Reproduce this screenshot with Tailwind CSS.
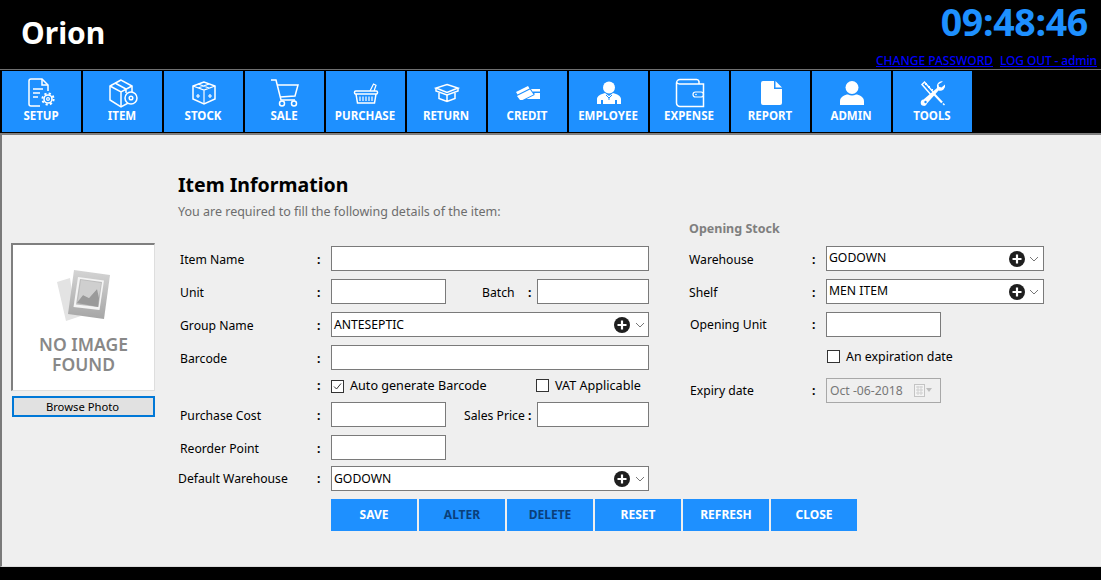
<!DOCTYPE html>
<html lang="en">
<head>
<meta charset="UTF-8" />
<title>Orion</title>
<script src="https://cdn.jsdelivr.net/npm/@tailwindcss/browser@4"></script>
</head>
<body class="bg-black font-['Noto_Sans','Open_Sans',sans-serif] text-[12.2px] text-black overflow-hidden">
<div class="w-[1101px] h-[580px] flex flex-col bg-black">

  <!-- Header -->
  <header class="h-[69px] flex justify-between shrink-0">
    <div class="pl-[21px] pt-[12px] text-[30px] leading-[42px] font-bold text-white">Orion</div>
    <div class="flex flex-col items-end pr-[4px]">
      <div class="pr-[9px] text-[37.5px] leading-[44px] font-bold tracking-[-0.3px] text-[#1e90ff]">09:48:46</div>
      <div class="mt-[9px] flex gap-[7px] text-[12px] leading-[16px] font-medium text-[#0000ff] underline">
        <a href="#">CHANGE PASSWORD</a>
        <a href="#" class="tracking-[-0.13px]">LOG OUT - admin</a>
      </div>
    </div>
  </header>

  <!-- Toolbar -->
  <nav class="h-[64px] shrink-0 border-t border-[#6f6f6f] pt-[1px] pl-[2px] flex gap-[2px]">
    <a class="w-[79px] h-[61px] bg-[#1e90ff] flex flex-col items-center pt-[7px] pr-[1px] text-white text-[11.5px] font-bold">
      <svg class="w-[31px] h-[31px] shrink-0" viewBox="0 0 31 31" fill="none" stroke="#fff" stroke-width="1.5"><path d="M14 28H5a2 2 0 0 1-2-2V3a2 2 0 0 1 2-2h11l6 6v6"/><path d="M16 1v6h6M7 11h10M7 15h7M7 19h5"/><circle cx="22" cy="21" r="7" fill="#1e90ff" stroke="none"/><circle cx="22" cy="21" r="4" stroke-width="1.6"/><circle cx="22" cy="21" r="5.6" stroke-width="2" stroke-dasharray="2.2 2.2"/><circle cx="22" cy="21" r="1.4" stroke-width="1.2"/></svg>
      <span class="leading-[14px]">SETUP</span>
    </a>
    <a class="w-[79px] h-[61px] bg-[#1e90ff] flex flex-col items-center pt-[7px] pr-[1px] text-white text-[11.5px] font-bold">
      <svg class="w-[31px] h-[31px] shrink-0" viewBox="0 0 31 31" fill="none" stroke="#fff" stroke-width="1.5"><path d="M14 2 3 8v14l11 7 11-6V8z"/><path d="M3 8l11 6 11-6M14 14v15M8 5l11 6v4"/><circle cx="24" cy="20" r="6" fill="#1e90ff"/><circle cx="24" cy="20" r="1.8"/></svg>
      <span class="leading-[14px]">ITEM</span>
    </a>
    <a class="w-[79px] h-[61px] bg-[#1e90ff] flex flex-col items-center pt-[7px] pr-[1px] text-white text-[11.5px] font-bold">
      <svg class="w-[31px] h-[31px] shrink-0" viewBox="0 0 31 31" fill="none" stroke="#fff" stroke-width="1.5"><path d="M16 4 5 8v13l11 5 11-5V8z"/><path d="M5 8l11 4 11-4M16 12v14M10 6l11 4M21 6l-11 4M10 20v-4M12 18h-4M22 20v-4M20 18h4" stroke-width="1.2"/></svg>
      <span class="leading-[14px]">STOCK</span>
    </a>
    <a class="w-[79px] h-[61px] bg-[#1e90ff] flex flex-col items-center pt-[7px] pr-[1px] text-white text-[11.5px] font-bold">
      <svg class="w-[31px] h-[31px] shrink-0" viewBox="0 0 31 31" fill="none" stroke="#fff" stroke-width="1.5"><path d="M2 2h5l5 20h14"/><path d="M8 7h21l-3 11-15 1"/><circle cx="13" cy="25.5" r="2.5"/><circle cx="25" cy="25.5" r="2.5"/></svg>
      <span class="leading-[14px]">SALE</span>
    </a>
    <a class="w-[79px] h-[61px] bg-[#1e90ff] flex flex-col items-center pt-[7px] pr-[1px] text-white text-[11.5px] font-bold">
      <svg class="w-[31px] h-[31px] shrink-0" viewBox="0 0 31 31" fill="none" stroke="#fff" stroke-width="1.5"><rect x="4.5" y="13" width="23" height="3" rx="1.2"/><path d="M6 16l1.5 9h17l1.5-9"/><path d="M20 13l3.5-7 2.5 1.2-2 5.8M10 18.500v4.500M13 18.500v4.500M16 18.500v4.500M19 18.500v4.500M22 18.500v4.500" stroke-width="1.2"/></svg>
      <span class="leading-[14px]">PURCHASE</span>
    </a>
    <a class="w-[79px] h-[61px] bg-[#1e90ff] flex flex-col items-center pt-[7px] pr-[1px] text-white text-[11.5px] font-bold">
      <svg class="w-[31px] h-[31px] shrink-0" viewBox="0 0 31 31" fill="none" stroke="#fff" stroke-width="1.500"><path d="M16 6.500 27 10l-11 4.500L5 10z"/><path d="M5 10v3l11 4 11-4v-3"/><path d="M8 15v5.500l8 3 8-3V15M16 17v6.500"/></svg>
      <span class="leading-[14px]">RETURN</span>
    </a>
    <a class="w-[79px] h-[61px] bg-[#1e90ff] flex flex-col items-center pt-[7px] pr-[1px] text-white text-[11.5px] font-bold">
      <svg class="w-[31px] h-[31px] shrink-0" viewBox="0 0 31 31" fill="#fff"><path d="M4 14 16 8l1.500 2.500L5.500 16.500z"/><path d="M5 18l13-6.500 3.500 5-11 5.500H8z"/><path d="M19 11h9v2.500h-7.500zM22.500 15H28v6H14.500l8-4z"/></svg>
      <span class="leading-[14px]">CREDIT</span>
    </a>
    <a class="w-[79px] h-[61px] bg-[#1e90ff] flex flex-col items-center pt-[7px] pr-[1px] text-white text-[11.5px] font-bold">
      <svg class="w-[31px] h-[31px] shrink-0" viewBox="0 0 31 31" fill="#fff"><circle cx="16" cy="9.500" r="6"/><path d="M4 26v-5c0-3 4-5 8-6l4 3 4-3c4 1 8 3 8 6v5h-4v-4h-2v4H10v-4H8v4z"/><path d="M13 17l3 3 3-3M16 20v2" fill="none" stroke="#1e90ff" stroke-width="1"/></svg>
      <span class="leading-[14px]">EMPLOYEE</span>
    </a>
    <a class="w-[79px] h-[61px] bg-[#1e90ff] flex flex-col items-center pt-[7px] pr-[1px] text-white text-[11.5px] font-bold">
      <svg class="w-[31px] h-[31px] shrink-0" viewBox="0 0 31 31" fill="none" stroke="#fff" stroke-width="1.500"><path d="M25 6V3.500A2.500 2.500 0 0 0 22.500 1.500H6A3.500 3.500 0 0 0 2.500 5v20A3.500 3.500 0 0 0 6 28.500h23.500V6H6A3.500 3.500 0 0 1 2.500 4"/><rect x="19" y="14" width="10.500" height="5" rx="2.500" stroke-width="1.200"/><circle cx="22" cy="16.500" r="0.800" fill="#fff" stroke="none"/></svg>
      <span class="leading-[14px]">EXPENSE</span>
    </a>
    <a class="w-[79px] h-[61px] bg-[#1e90ff] flex flex-col items-center pt-[7px] pr-[1px] text-white text-[11.5px] font-bold">
      <svg class="w-[31px] h-[31px] shrink-0" viewBox="0 0 31 31" fill="#fff"><path d="M8 3h11v8h8v14a2 2 0 0 1-2 2H8a2 2 0 0 1-2-2V5a2 2 0 0 1 2-2z"/><path d="M20.500 3 27 9.500h-6.500z"/></svg>
      <span class="leading-[14px]">REPORT</span>
    </a>
    <a class="w-[79px] h-[61px] bg-[#1e90ff] flex flex-col items-center pt-[7px] pr-[1px] text-white text-[11.5px] font-bold">
      <svg class="w-[31px] h-[31px] shrink-0" viewBox="0 0 31 31" fill="#fff"><circle cx="16" cy="9.500" r="6.500"/><path d="M4 27v-4c0-4 5-6.500 8-6.500 2.500 1.300 5.500 1.300 8 0 3 0 8 2.500 8 6.500v4z"/></svg>
      <span class="leading-[14px]">ADMIN</span>
    </a>
    <a class="w-[79px] h-[61px] bg-[#1e90ff] flex flex-col items-center pt-[7px] pr-[1px] text-white text-[11.5px] font-bold">
      <svg class="w-[31px] h-[31px] shrink-0" viewBox="0 0 31 31" fill="none" stroke="#fff"><path d="M5 6.500 7.500 4l10 11.500-2.500 2.500z" stroke-width="1.500"/><path d="M17 16l8 8.500" stroke-width="2.200"/><path d="M26 25.500l1.500 1.500" stroke-width="1.500"/><path d="M8 7l2-2M11 10l2-2M14 13l2-2" stroke-width="1"/><path d="M26 3.500a5 5 0 0 0-6 6.500L6.500 21.500a3.200 3.200 0 1 0 3.500 4L21.500 12.500a5 5 0 0 0 6.500-6L24.500 9.500l-2.500-.8-.5-2.500z" fill="#fff" stroke="none"/><circle cx="8.500" cy="24" r="1.200" fill="#1e90ff" stroke="none"/></svg>
      <span class="leading-[14px]">TOOLS</span>
    </a>
  </nav>

  <!-- Main panel -->
  <main class="w-[1101px] h-[434px] shrink-0 border-t-[2px] border-t-[#808080] border-l-[2px] border-l-[#7a7a7a] border-b border-b-[#dcdcdc] bg-[#efefef] flex flex-col">
    <div class="flex h-[364px]">

      <!-- Photo -->
      <div class="w-[176px] shrink-0 pl-[9px] pt-[108px]">
        <div class="w-[144px] h-[148px] border-[1px] border-t-[2px] border-l-[2px] border-t-[#7f7f7f] border-l-[#7f7f7f] border-r-[#dedede] border-b-[#dedede] bg-white flex flex-col items-center pt-[24px]">
          <svg class="w-[56px] h-[54px] shrink-0" viewBox="0 0 56 54">
            <defs><linearGradient id="ph" x1="0" y1="0" x2="0" y2="1"><stop offset="0" stop-color="#d4d4d4"/><stop offset="1" stop-color="#a6a6a6"/></linearGradient></defs>
            <path d="M1 13 14 9l5 36 6 2-15 5z" fill="#e3e3e3"/>
            <path d="M18 1 54 6l-6 44-36-5z" fill="url(#ph)"/>
            <path d="M22 8 48 11.500 43.500 41 17.500 38z" fill="#f4f4f4"/>
            <path d="M24 10 46 13l-3.500 25L20 35.500z" fill="#bdbdbd"/>
            <path d="M21 34l6-8 6 3 8-9 3 1-2 17z" fill="#9a9a9a"/>
            <path d="M25 11 45 14 43 29l-2-9-8 9-6-3-5 6z" fill="#cfcfcf"/>
          </svg>
          <div class="mt-[11px] text-center text-[17.5px] leading-[20px] font-semibold text-[#888888]">NO IMAGE<br />FOUND</div>
        </div>
        <button class="mt-[5px] ml-[1px] w-[143px] h-[21px] border-2 border-[#0078d7] bg-[#e1e1e1] pr-[2px] text-[11.25px] leading-[17px]">Browse Photo</button>
      </div>

      <!-- Item form -->
      <div class="w-[471px] shrink-0 pt-[36px]">
        <h1 class="text-[19.5px] leading-[27px] font-bold">Item Information</h1>
        <p class="mt-[6px] text-[12.5px] leading-[16px] text-[#6d6d6d]">You are required to fill the following details of the item:</p>

        <div class="mt-[26px] flex flex-col">
          <div class="flex items-center h-[25px] mb-[8px]">
            <label class="w-[139px] pl-[2px] pt-[4px]">Item Name</label><span class="w-[14px] pt-[4px] font-bold">:</span>
            <input class="w-[318px] h-[25px] bg-white border border-[#7a7a7a]" />
          </div>
          <div class="flex items-center h-[25px] mb-[8px]">
            <label class="w-[139px] pl-[2px] pt-[4px]">Unit</label><span class="w-[14px] pt-[4px] font-bold">:</span>
            <input class="w-[115px] h-[25px] bg-white border border-[#7a7a7a]" />
            <label class="w-[46px] ml-[36px] pt-[4px]">Batch</label><span class="w-[9px] pt-[4px] font-bold">:</span>
            <input class="w-[112px] h-[25px] bg-white border border-[#7a7a7a]" />
          </div>
          <div class="flex items-center h-[25px] mb-[8px]">
            <label class="w-[139px] pl-[2px] pt-[4px]">Group Name</label><span class="w-[14px] pt-[4px] font-bold">:</span>
            <div class="w-[318px] h-[25px] bg-white border border-[#7a7a7a] flex items-center pl-[2px] pr-[3px]">
              <span class="flex-1 pt-[2px]">ANTESEPTIC</span>
              <svg class="w-[16px] h-[16px]" viewBox="0 0 16 16"><circle cx="8" cy="8" r="8" fill="#1f1f1f"/><path d="M8 3.500v9M3.500 8h9" stroke="#fff" stroke-width="2.200"/></svg>
              <svg class="ml-[5px] w-[10px] h-[6px]" viewBox="0 0 10 6" fill="none" stroke="#777"><path d="M1 1l4 4 4-4"/></svg>
            </div>
          </div>
          <div class="flex items-center h-[25px] mb-[4px]">
            <label class="w-[139px] pl-[2px] pt-[4px]">Barcode</label><span class="w-[14px] pt-[4px] font-bold">:</span>
            <input class="w-[318px] h-[25px] bg-white border border-[#7a7a7a]" />
          </div>
          <div class="flex items-center h-[24px] mb-[4px] text-[12.6px]">
            <span class="w-[139px]"></span><span class="w-[14px] font-bold">:</span>
            <span class="w-[13px] h-[13px] border border-[#333] bg-white flex items-center justify-center">
              <svg class="w-[9px] h-[9px]" viewBox="0 0 9 9" fill="none" stroke="#333"><path d="M1 4.500l2.500 2.500L8 1.500"/></svg>
            </span>
            <span class="ml-[6px] w-[186px]">Auto generate Barcode</span>
            <span class="w-[13px] h-[13px] border border-[#333] bg-white -mt-[1px]"></span>
            <span class="ml-[6px]">VAT Applicable</span>
          </div>
          <div class="flex items-center h-[25px] mb-[8px]">
            <label class="w-[139px] pl-[2px] pt-[4px]">Purchase Cost</label><span class="w-[14px] pt-[4px] font-bold">:</span>
            <input class="w-[115px] h-[25px] bg-white border border-[#7a7a7a]" />
            <label class="ml-[18px] w-[64px] pt-[4px]">Sales Price</label><span class="w-[9px] pt-[4px] font-bold">:</span>
            <input class="w-[112px] h-[25px] bg-white border border-[#7a7a7a]" />
          </div>
          <div class="flex items-center h-[25px] mb-[6px]">
            <label class="w-[139px] pl-[2px] pt-[4px]">Reorder Point</label><span class="w-[14px] pt-[4px] font-bold">:</span>
            <input class="w-[115px] h-[25px] bg-white border border-[#7a7a7a]" />
          </div>
          <div class="flex items-center h-[25px]">
            <label class="w-[139px] pt-[2px]">Default Warehouse</label><span class="w-[14px] pt-[2px] font-bold">:</span>
            <div class="w-[318px] h-[25px] bg-white border border-[#7a7a7a] flex items-center pl-[2px] pr-[3px]">
              <span class="flex-1 pt-[2px]">GODOWN</span>
              <svg class="w-[16px] h-[16px]" viewBox="0 0 16 16"><circle cx="8" cy="8" r="8" fill="#1f1f1f"/><path d="M8 3.500v9M3.500 8h9" stroke="#fff" stroke-width="2.200"/></svg>
              <svg class="ml-[5px] w-[10px] h-[6px]" viewBox="0 0 10 6" fill="none" stroke="#777"><path d="M1 1l4 4 4-4"/></svg>
            </div>
          </div>
        </div>
      </div>

      <!-- Opening stock -->
      <div class="ml-[40px] w-[355px] shrink-0 pt-[86px]">
        <h2 class="text-[12.5px] leading-[16px] font-bold text-[#7f7f7f]">Opening Stock</h2>
        <div class="mt-[9px] flex flex-col">
          <div class="flex items-center h-[25px] mb-[8px]">
            <label class="w-[123px] pt-[4px]">Warehouse</label><span class="w-[14px] pt-[4px] font-bold">:</span>
            <div class="w-[218px] h-[25px] bg-white border border-[#7a7a7a] flex items-center pl-[2px] pr-[4px]">
              <span class="flex-1">GODOWN</span>
              <svg class="w-[16px] h-[16px]" viewBox="0 0 16 16"><circle cx="8" cy="8" r="8" fill="#1f1f1f"/><path d="M8 3.500v9M3.500 8h9" stroke="#fff" stroke-width="2.200"/></svg>
              <svg class="ml-[4px] w-[10px] h-[6px]" viewBox="0 0 10 6" fill="none" stroke="#777"><path d="M1 1l4 4 4-4"/></svg>
            </div>
          </div>
          <div class="flex items-center h-[25px] mb-[8px]">
            <label class="w-[123px] pt-[4px]">Shelf</label><span class="w-[14px] pt-[4px] font-bold">:</span>
            <div class="w-[218px] h-[25px] bg-white border border-[#7a7a7a] flex items-center pl-[2px] pr-[4px]">
              <span class="flex-1">MEN ITEM</span>
              <svg class="w-[16px] h-[16px]" viewBox="0 0 16 16"><circle cx="8" cy="8" r="8" fill="#1f1f1f"/><path d="M8 3.500v9M3.500 8h9" stroke="#fff" stroke-width="2.200"/></svg>
              <svg class="ml-[4px] w-[10px] h-[6px]" viewBox="0 0 10 6" fill="none" stroke="#777"><path d="M1 1l4 4 4-4"/></svg>
            </div>
          </div>
          <div class="flex items-center h-[25px] mb-[9px]">
            <label class="w-[123px] pl-[1px] pt-[2px]">Opening Unit</label><span class="w-[14px] pt-[2px] font-bold">:</span>
            <input class="w-[115px] h-[25px] bg-white border border-[#7a7a7a]" />
          </div>
          <div class="flex items-center h-[20px] mb-[12px] pl-[138px] text-[12.4px]">
            <span class="w-[13px] h-[13px] border border-[#333] bg-white"></span>
            <span class="ml-[6px] pt-[2px]">An expiration date</span>
          </div>
          <div class="flex items-center h-[25px]">
            <label class="w-[123px] pl-[1px] pt-[2px]">Expiry date</label><span class="w-[14px] pt-[2px] font-bold">:</span>
            <div class="w-[115px] h-[25px] bg-[#efefef] border border-[#a8a8a8] flex items-center pl-[3px] text-[#777777]">
              <span class="w-[84px] pt-[2px]">Oct -06-2018</span>
              <svg class="w-[19px] h-[13px]" viewBox="0 0 19 13"><rect x="0.500" y="0.500" width="10" height="12" fill="#f4f4f4" stroke="#c4c4c4"/><path d="M2 3h7M2 6h7M2 9h7M4 2v9M7 2v9" stroke="#d0d0d0"/><path d="M12 4h6l-3 4z" fill="#bdbdbd"/></svg>
            </div>
          </div>
        </div>
      </div>
    </div>

    <!-- Actions -->
    <div class="pl-[329px] flex gap-[2px] text-[12px] font-bold">
      <button class="w-[86px] h-[32px] bg-[#1e90ff] text-white">SAVE</button>
      <button class="w-[86px] h-[32px] bg-[#1e90ff] text-[#0a3f7a]">ALTER</button>
      <button class="w-[86px] h-[32px] bg-[#1e90ff] text-[#0a3f7a]">DELETE</button>
      <button class="w-[86px] h-[32px] bg-[#1e90ff] text-white">RESET</button>
      <button class="w-[86px] h-[32px] bg-[#1e90ff] text-white">REFRESH</button>
      <button class="w-[86px] h-[32px] bg-[#1e90ff] text-white">CLOSE</button>
    </div>
  </main>
</div>
</body>
</html>
